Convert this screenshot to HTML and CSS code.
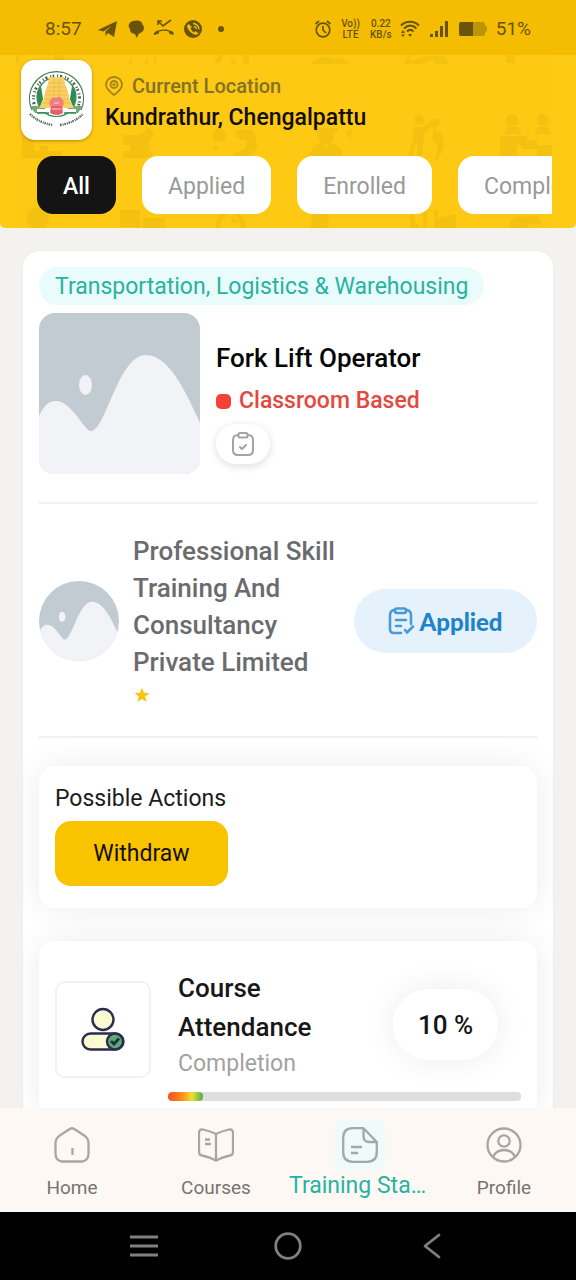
FILE: index.html
```html
<!DOCTYPE html>
<html lang="en">
<head>
<meta charset="utf-8">
<meta name="viewport" content="width=device-width, initial-scale=1">
<title>Training Status</title>
<link rel="stylesheet" href="styles.css">
</head>
<body>
<svg class="defs" aria-hidden="true">
  <symbol id="placeholder" viewBox="0 0 161 161">
    <rect width="161" height="161" fill="#c2cad2"/>
    <path d="M0 103C5 92 10 88 17 88C33 88 45 118 52 118C67 118 79 42 107 42C131 42 148 82 161 110V161H0Z" fill="#f1f3f6"/>
    <ellipse cx="46.500" cy="72" rx="6.500" ry="10" fill="#f1f3f6"/>
  </symbol>
</svg>
<div class="app">
  <div class="statusbar">
    <span class="clock">8:57</span>
    <svg class="st-left" width="130" height="20" viewBox="0 0 130 20" aria-hidden="true">
      <g fill="#695309">
        <path d="M0 11L19 2L16 18L10 14L7.500 17V12.500L14 6.500L5.500 12.500Z"/>
        <path d="M38 1.500C42 1 44.500 3.500 44.500 5.500C47 8 46.500 13 41 14.500L38.500 19L37 15C33 14.500 31.500 12 32 10C29 7 31 2 38 1.500Z"/>
        <path d="M56 16C55 14 58 12 60 11.500C64 10 69 10 72 11.500C75 12.500 77 14 75 16L71 14.500V12.500C68 11.500 64 11.500 61 12.500V14.500Z"/>
        <circle cx="95" cy="10" r="9"/>
        <circle cx="123" cy="10" r="3"/>
      </g>
      <path d="M60 2L65 7L73 1M60 6V2H64" fill="none" stroke="#695309" stroke-width="1.600"/>
      <path d="M90.500 5C88 7 89.500 10 92 12.500C94.500 15 98 17 100.500 14.500L97.500 12L96 13.500C94.500 12.500 93 11 92.500 9L94 8Z" fill="#f4bd02"/>
      <path d="M95 4.500A6 6 0 0 1 101 10.500M96 7.500A3 3 0 0 1 98.500 10" fill="none" stroke="#f4bd02" stroke-width="1.400"/>
    </svg>
    <span class="spacer"></span>
    <svg width="18" height="20" viewBox="0 0 18 20" fill="none" stroke="#695309" stroke-width="1.700" aria-hidden="true"><circle cx="9" cy="11" r="6.800"/><path d="M9 7V11L12 14M1.500 5L5 2M16.500 5L13 2"/></svg>
    <span class="tiny volte"><span>Vo))</span><span>LTE</span></span>
    <span class="tiny speed"><span>0.22</span><span>KB/s</span></span>
    <svg class="wifi" width="20" height="18" viewBox="0 0 20 18" fill="none" stroke="#695309" stroke-width="2" aria-hidden="true"><path d="M1 5.500C6 .5 14 .5 19 5.500M4 8.500C8 4.500 12.500 4.500 16.500 8.500M7 11.500C9 9.500 11.500 9.500 13.500 11.500"/><path d="M8 14H12L10 17ZM1 13L3 10L5 13ZM1 14.500H5L3 17Z" fill="#695309" stroke="none"/></svg>
    <svg class="signal" width="19" height="18" viewBox="0 0 19 18" fill="#695309" aria-hidden="true"><path d="M0 14H3V17H0ZM5 11H8V17H5ZM10 6H13V17H10ZM15 1H18V17H15Z"/></svg>
    <svg class="battery" width="29" height="14" viewBox="0 0 29 14" aria-hidden="true"><path d="M2 0H24Q26 0 26 3L28 5V9L26 11Q26 14 24 14H2Q0 14 0 12V2Q0 0 2 0Z" fill="#bd9403"/><path d="M2 0H14V14H2Q0 14 0 12V2Q0 0 2 0Z" fill="#695309"/></svg>
    <span class="percent">51%</span>
  </div>

  <header class="header">
    <svg class="pattern" width="576" height="173" viewBox="0 0 576 173" fill="#b98200" aria-hidden="true">
      <path d="M16 0H19V8H16ZM54 0H62L65 5H54ZM129 5H132V9H129ZM145 4H148V9H145ZM154 2H156V8H154ZM215 4L219 0H224L220 8H215ZM231 4H236V9H231ZM243 0H249V9H243ZM309 9L317 4L325 1L335 4L341 2L350 9ZM403 9L408 0H412L409 6L427 1H444L450 9H436L432 5L422 9ZM506 0H515V8H506Z"/>
      <path d="M22 80H34V96H62V103H22ZM40 91H48V96H40Z"/>
      <path d="M123 80H138L150 72L154 79L145 94V103H123V96H130V90H123ZM139 95L148 87L153 103H141Z"/>
      <circle cx="219" cy="80" r="7"/><path d="M235 75H253L258 91L252 100L236 103L232 98L245 94L247 86L236 83ZM213 91H218V95H213Z"/>
      <circle cx="326" cy="82" r="8"/><path d="M309 98L315 90L322 88L326 95L330 88L340 92L343 101H309ZM345 78L352 74L351 84ZM315 73H338V77H315Z"/>
      <circle cx="419" cy="65" r="5"/><circle cx="435" cy="68" r="5"/><path d="M414 72H422L431 67L433 71L424 79L422 101H417V85L412 101H408L413 85ZM434 73L442 79L444 90L438 105H435L438 92L432 84Z"/>
      <circle cx="512" cy="65" r="6"/><circle cx="543" cy="65" r="6"/><path d="M504 79L507 72H518L521 79ZM535 79L538 72H548L551 79ZM500 81H527V85H537V90H552V101H537V94H522V90H517V101H500Z"/>
      <circle cx="38" cy="163" r="11"/><path d="M32 160H45V173H32ZM120 155H140V172H120ZM143 163H165V173H143Z"/>
      <path d="M216 173V165Q219 154 232 154Q245 157 246 173H241Q240 160 231 159Q221 160 220 173ZM233 162L240 168H230Z"/>
      <circle cx="320" cy="163" r="9"/><path d="M309 173Q318 159 330 173ZM409 156H413L415 166L422 173H410ZM423 155H427V173H423ZM434 155H438V163L456 159V173H434ZM509 170Q512 159 523 162L533 160Q544 164 540 170L529 168L527 173H509Z"/>
    </svg>
    <div class="brand">
      <div class="logo">
        <svg width="59" height="62" viewBox="0 0 59 62" role="img" aria-label="State emblem">
          <path d="M5 41A27 27 0 1 1 54 41" fill="#fff" stroke="#3a7d50" stroke-width="1.200"/>
          <path d="M8 38A23 23 0 1 1 51 38" fill="none" stroke="#4c5a4a" stroke-width="3" stroke-dasharray="1 2 2 3 1 1.500 1.500 3"/>
          <circle cx="29.500" cy="28" r="19.500" fill="#fff" stroke="#2d8b4e" stroke-width="1.200"/>
          <path d="M14 17C8 25 10 32 13 38L16 30ZM45 17C51 25 49 32 46 38L43 30Z" fill="#2d8b4e"/>
          <path d="M3 37H18V44H8ZM41 37H56L51 44H41Z" fill="#75a87b"/>
          <path d="M22 8H37L38 15L40 20L43 32L47 39H12L16 32L19 20L21 15Z" fill="#f9d063"/>
          <path d="M21 14H38M20 18H39M19 22H41M18 26H42M17 30H42M15 34H44M27 10V26M32 10V26" stroke="#e8b43c" stroke-width=".7"/>
          <path d="M23 37Q21 33 24 30Q26 27 29.500 29Q33 26 35 30Q38 33 36 37Z" fill="#f27f80"/>
          <path d="M10 40H49V43H10Z" fill="#fff"/>
          <path d="M24 37H35L36 44Q30 48 23 44Z" fill="#ea5c6a"/><path d="M25 40H34M27 34H32" stroke="#fbd5d5"/>
          <path d="M10 44H22M37 44H49" stroke="#2d8b4e" stroke-width="1.500"/>
          <path d="M3 45Q12 54 26 56M33 56Q47 54 56 45" stroke="#4e6b50" stroke-width="2.400" stroke-dasharray="1.500 1 1 .8" fill="none"/>
        </svg>
      </div>
      <div class="location">
        <div class="loc-label">
          <svg width="18" height="20" viewBox="0 0 18 20" fill="none" stroke="#a58220" stroke-width="1.800" aria-hidden="true"><path d="M9 1C4 1 1 4.500 1 9C1 13 5 16 9 19C13 16 17 13 17 9C17 4.500 14 1 9 1Z"/><circle cx="9" cy="8.500" r="3.500"/><circle cx="9" cy="8.500" r=".7"/></svg>
          <span>Current Location</span>
        </div>
        <div class="loc-name">Kundrathur, Chengalpattu</div>
      </div>
    </div>
    <div class="chips">
      <button class="chip active" type="button">All</button>
      <button class="chip" type="button">Applied</button>
      <button class="chip" type="button">Enrolled</button>
      <button class="chip" type="button">Completed</button>
    </div>
  </header>

  <main class="content">
    <article class="card">
      <div class="tag">Transportation, Logistics &amp; Warehousing</div>
      <section class="course">
        <svg class="thumb" role="img" aria-label="Course picture"><use href="#placeholder"/></svg>
        <div class="course-info">
          <h1 class="course-name">Fork Lift Operator</h1>
          <div class="mode"><span class="mode-dot"></span>Classroom Based</div>
          <div class="check-pill">
            <svg width="24" height="25" viewBox="0 0 24 25" fill="none" stroke="#a3a3a3" stroke-width="2" stroke-linecap="round" stroke-linejoin="round" aria-hidden="true"><path d="M7 3Q2 3 2 8V18Q2 23 7 23H17Q22 23 22 18V8Q22 3 17 3"/><rect x="7.500" y="1" width="9" height="4.500" rx="1.500"/><path d="M9 15L11 17L15 13"/></svg>
          </div>
        </div>
      </section>
      <section class="provider">
        <svg class="avatar" role="img" aria-label="Provider picture"><use href="#placeholder"/></svg>
        <div class="provider-info">
          <h2 class="provider-name">Professional Skill Training And Consultancy Private Limited</h2>
          <svg class="star" width="18" height="16" viewBox="0 0 18 16" aria-hidden="true"><path d="M9 0.500L11 5.700L16.500 6L12.200 9.400L13.700 15L9 11.900L4.300 15L5.800 9.400L1.500 6L7 5.700Z" fill="#f9c410"/></svg>
        </div>
        <div class="applied">
          <svg width="27" height="28" viewBox="0 0 27 28" fill="none" stroke="#4a9ad9" stroke-width="2.600" stroke-linecap="round" stroke-linejoin="round" aria-hidden="true"><path d="M7 3H6Q2 4 2 8V22Q2 26 6 26H13M18 3H19Q23 4 23 8V17"/><rect x="7" y="1.500" width="11" height="4.500" rx="2"/><path d="M8 13H18M8 19H13M17 23L19 25.500L25 19.500"/></svg>
          <span>Applied</span>
        </div>
      </section>
      <section class="panel actions">
        <h2 class="panel-title">Possible Actions</h2>
        <button class="withdraw" type="button">Withdraw</button>
      </section>
      <section class="panel attendance">
        <div class="att-icon">
          <svg width="44" height="44" viewBox="0 0 44 44" fill="#fbfbd2" stroke="#2c2c50" stroke-width="2.400" aria-hidden="true"><circle cx="22" cy="12.500" r="10.500"/><rect x="1.500" y="26.500" width="41" height="16" rx="8"/><circle cx="34" cy="34.500" r="8" fill="#5fa97a"/><path d="M30 34L33 37L38 31.500" fill="none" stroke="#123a2b" stroke-width="2.800"/></svg>
        </div>
        <div class="att-body">
          <div class="att-row">
            <div class="att-text">
              <h2 class="att-title">Course Attendance</h2>
              <p class="att-sub">Completion</p>
            </div>
            <div class="att-value">10 %</div>
          </div>
          <div class="progress" role="progressbar" aria-label="Course attendance" aria-valuenow="10" aria-valuemin="0" aria-valuemax="100"><div class="progress-fill" style="width:10%"></div></div>
        </div>
      </section>
    </article>
  </main>

  <nav class="tabs">
    <a class="tab" href="#home">
      <svg width="36" height="36" viewBox="0 0 36 36" fill="none" stroke="#a8a5a3" stroke-width="2.300" stroke-linejoin="round" aria-hidden="true"><path d="M15 2.500L5 9Q1.500 12 1.500 16V27Q2 34 8 34.500H28Q34 34 34.500 27V16Q34.500 12 31 9L21 2.500Q18 0 15 2.500Z"/><path d="M18.500 21V28"/></svg>
      <span>Home</span></a>
    <a class="tab" href="#courses">
      <svg width="36" height="36" viewBox="0 0 36 36" fill="none" stroke="#a8a5a3" stroke-width="2.300" stroke-linejoin="round" aria-hidden="true"><path d="M18 7Q12 4 5 2.500Q1 2 1 6V25Q1 28 4 28.500Q12 30 18 33.500Q24 30 32 28.500Q35 28 35 25V6Q35 2 31 2.500Q24 4 18 7ZM18 7V33M7 12.500H12M7 17H13"/></svg>
      <span>Courses</span></a>
    <a class="tab current" href="#training" aria-current="page">
      <span class="glow"><svg width="36" height="36" viewBox="0 0 36 36" fill="none" stroke="#a3a8a9" stroke-width="2.300" stroke-linejoin="round" aria-hidden="true"><path d="M21.500 1.200H11Q1.200 1.200 1.200 11V25Q1.200 34.800 11 34.800H25Q34.800 34.800 34.800 25V15ZM21.500 1.200V9Q21.500 15 27 15H34.800M9 20H20M9 26H16"/></svg></span>
      <span class="label">Training Status</span></a>
    <a class="tab" href="#profile">
      <svg width="36" height="36" viewBox="0 0 36 36" fill="none" stroke="#a8a5a3" stroke-width="2.300" aria-hidden="true"><circle cx="18" cy="18" r="16.500"/><circle cx="18" cy="14" r="5.700"/><path d="M7 30Q10 23 18 23Q26 23 29 30"/></svg>
      <span>Profile</span></a>
  </nav>

  <div class="sysnav">
    <button type="button" aria-label="Recent apps"><svg width="28" height="24" viewBox="0 0 28 24" stroke="#808080" stroke-width="3"><path d="M0 3H28M0 12H28M0 21H28"/></svg></button>
    <button type="button" aria-label="Home screen"><svg width="28" height="28" viewBox="0 0 28 28" fill="none" stroke="#808080" stroke-width="2.800"><circle cx="14" cy="14" r="12.300"/></svg></button>
    <button type="button" aria-label="Back"><svg width="18" height="26" viewBox="0 0 18 26" fill="none" stroke="#808080" stroke-width="2.800" stroke-linecap="round" stroke-linejoin="round"><path d="M16 2L2 13L16 24"/></svg></button>
  </div>
</div>
</body>
</html>
```
FILE: styles.css
```css
* { box-sizing: border-box; }
body { margin: 0; font-family: Roboto, "Noto Sans", sans-serif; background: #f3f2ee; color: #141414; }
h1, h2, p { margin: 0; font-weight: 500; }
button { font: inherit; border: 0; cursor: pointer; }
svg { display: block; flex: none; }
.defs { position: absolute; width: 0; height: 0; }
.app { height: 100vh; display: flex; flex-direction: column; overflow: hidden; }

.statusbar { flex: none; height: 55px; padding: 2px 45px 0; display: flex; align-items: center; background: #f4bd02; color: #695309; font-size: 19px; }
.clock { margin-right: 16px; }
.spacer { flex: 1; }
.tiny { display: flex; flex-direction: column; align-items: center; font-size: 10px; line-height: 11px; font-weight: 500; }
.volte { margin: 0 10px 0 9px; }
.wifi { margin-left: 8px; }
.signal { margin: 0 10px; }
.percent { margin-left: 8px; }

.header { position: relative; flex: none; padding: 5px 24px 14px 21px; background: #fdca14; border-radius: 0 0 5px 5px; overflow: hidden; }
.pattern { position: absolute; top: 0; left: 0; opacity: .11; }
.brand { position: relative; display: flex; gap: 13px; }
.logo { width: 71px; height: 80px; border-radius: 14px; background: #fff; display: grid; place-items: center; box-shadow: 0 1px 3px rgba(110, 75, 0, .5); }
.location { padding-top: 10px; }
.loc-label { display: flex; align-items: center; gap: 9px; color: #837029; font-size: 20px; line-height: 32px; font-weight: 500; }
.loc-name { color: #130c02; font-size: 23px; line-height: 32px; font-weight: 500; }
.chips { position: relative; display: flex; gap: 26px; margin: 16px 0 0 3px; padding-left: 13px; overflow: hidden; }
.chip { flex: none; height: 58px; padding: 2px 26px 0; border-radius: 16px; background: #fff; color: #999; font-size: 23px; }
.chip.active { background: #141414; color: #fff; font-weight: 500; }

.content { flex: 1; min-height: 0; padding: 23px 23px 0; overflow-y: auto; scrollbar-width: none; }
.card { padding: 16px; background: #fff; border-radius: 16px; overflow: hidden; box-shadow: 0 0 2px rgba(0, 0, 0, .08); }
.tag { width: fit-content; height: 38px; padding: 0 16px; border-radius: 19px; background: #e9fbfb; color: #27b3a2; font-size: 23px; line-height: 40px; }
.course { display: flex; gap: 16px; align-items: center; padding: 8px 0 28px; border-bottom: 2px solid #f0f0f0; }
.thumb { width: 161px; height: 161px; border-radius: 16px; }
.course-info { padding-top: 13px; }
.course-name { color: #050505; font-size: 26px; line-height: 44px; }
.mode { display: flex; align-items: center; gap: 8px; color: #e4483f; font-size: 23px; line-height: 42px; font-weight: 500; }
.mode-dot { width: 15px; height: 15px; border-radius: 5px; background: #f44336; }
.check-pill { width: 54px; height: 40px; margin-top: 2px; border-radius: 20px; display: grid; place-items: center; box-shadow: 0 2px 8px rgba(0, 0, 0, .14); }
.provider { display: flex; align-items: center; padding: 32px 0 30px; border-bottom: 2px solid #f0f0f0; }
.avatar { width: 80px; height: 80px; border-radius: 50%; }
.provider-info { flex: 1; min-width: 0; margin: 0 8px 0 14px; }
.provider-name { margin-top: -3px; color: #6b6b6e; font-size: 26px; line-height: 37px; }
.star { margin: 6px 0 3px; }
.applied { flex: none; width: 183px; height: 64px; border-radius: 32px; display: flex; align-items: center; justify-content: center; gap: 4px; background: #e5f2fc; color: #1d83cb; font: 900 24px Lato, sans-serif; }

.panel { border-radius: 16px; background: #fff; box-shadow: 0 0 32px rgba(0, 0, 0, .08); }
.actions { margin-top: 28px; padding: 16px 16px 22px; }
.panel-title { font-size: 23px; line-height: 34px; font-weight: 400; color: #1c1c1c; }
.withdraw { width: 173px; height: 65px; margin-top: 5px; border-radius: 16px; background: #f9c300; color: #151005; font-size: 23px; display: block; }
.attendance { display: flex; align-items: center; gap: 17px; margin-top: 33px; padding: 16px; }
.att-icon { flex: none; width: 96px; height: 97px; border: 2px solid #f2f2f2; border-radius: 10px; display: grid; place-items: center; }
.att-body { flex: 1; padding-top: 12px; }
.att-row { display: flex; align-items: center; justify-content: space-between; gap: 24px; padding: 0 23px 0 10px; }
.att-title { font-size: 26px; line-height: 39px; color: #171717; }
.att-sub { font-size: 23px; line-height: 33px; font-weight: 400; color: #a2a2a2; }
.att-value { flex: none; width: 105px; height: 71px; border-radius: 35px; display: grid; place-items: center; background: #fff; box-shadow: 0 0 32px rgba(0, 0, 0, .08); font-size: 26px; font-weight: 500; }
.progress { height: 9px; margin-top: 12px; border-radius: 4px; background: #dedede; overflow: hidden; }
.progress-fill { height: 100%; border-radius: 4px; background: linear-gradient(90deg, #f4511e, #fb8c1c 40%, #f0df38 68%, #4caf50); }

.tabs { flex: none; height: 104px; display: grid; grid-template-columns: repeat(4, 1fr); background: #fef8f4; }
.tab { min-width: 0; padding-top: 19px; display: flex; flex-direction: column; align-items: center; gap: 10px; color: #777372; text-decoration: none; font-size: 19px; line-height: 30px; }
.tab.current { padding-top: 13px; gap: 2px; color: #27b3a2; font-size: 23px; }
.glow { padding: 6px; background: #effafa; box-shadow: 0 0 5px #effafa; }
.label { max-width: 100%; padding: 0 1px; overflow: hidden; text-overflow: ellipsis; white-space: nowrap; }
.sysnav { flex: none; height: 68px; padding: 0 72px; display: grid; grid-template-columns: repeat(3, 1fr); background: #000; }
.sysnav button { display: grid; place-items: center; padding: 0; background: none; }
```
